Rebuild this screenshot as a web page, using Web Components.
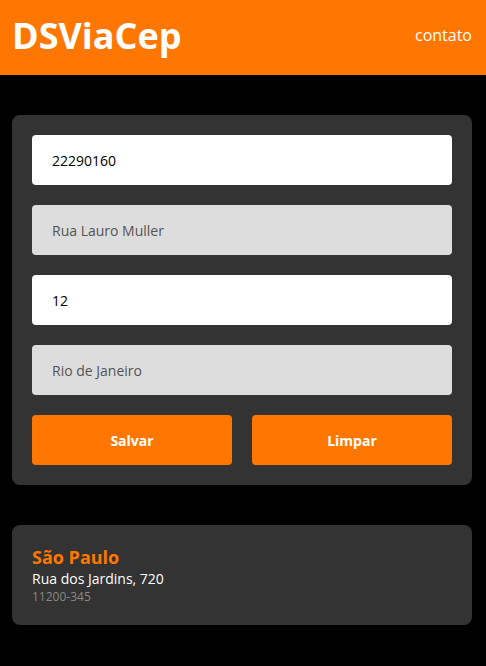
<!DOCTYPE html>
<html lang="pt-BR">
<head>
<meta charset="utf-8">
<meta name="viewport" content="width=device-width, initial-scale=1">
<title>DSViaCep</title>
<style>
  html { background: #000; }
  body { margin: 0; font-family: "Open Sans", sans-serif; color: #fff; --primary: #ff7700; --card: #333; }
</style>
</head>
<body>
<cep-app></cep-app>
<script>
const define = (name, html, init) => {
  const template = document.createElement('template');
  template.innerHTML = `<style>*{box-sizing:border-box}:host{display:block}</style>${html}`;
  customElements.define(name, class extends HTMLElement {
    constructor() {
      super();
      this.attachShadow({ mode: 'open' }).append(template.content.cloneNode(true));
    }
    connectedCallback() { if (init) init.call(this, this.shadowRoot); }
  });
};

define('cep-header', `
  <style>
    header { background: var(--primary); min-height: 75px; padding: 0 14px 4px 12px; display: flex; align-items: center; justify-content: space-between; }
    h1 { margin: 0; font-size: 36px; line-height: 48px; font-weight: 700; }
    a { display: block; color: #fff; font-size: 16px; line-height: 25px; text-decoration: none; }
  </style>
  <header><h1>DSViaCep</h1><nav><a href="#contato">contato</a></nav></header>`);

define('cep-card', `
  <style>:host { background: var(--card); border-radius: 8px; padding: 20px; }</style>
  <slot></slot>`);

define('cep-field', `
  <style>
    input { display: block; width: 100%; height: 50px; border: 0; border-radius: 4px; padding: 0 20px; background: #fff; color: #000; font: 14px "Open Sans", sans-serif; }
    input:disabled { background: #ddd; color: #545454; }
  </style>
  <input type="text">`, function (root) {
  const input = root.querySelector('input');
  input.value = this.getAttribute('value');
  input.disabled = this.hasAttribute('disabled');
  input.setAttribute('aria-label', this.getAttribute('label'));
});

define('cep-button', `
  <style>
    button { display: block; width: 100%; height: 50px; border: 0; border-radius: 4px; background: var(--primary); color: #fff; font: 700 14px "Open Sans", sans-serif; cursor: pointer; }
  </style>
  <button type="button"><slot></slot></button>`);

define('cep-address', `
  <style>
    h2 { margin: 0; color: var(--primary); font-size: 18px; line-height: 25px; font-weight: 700; }
    p { margin: 0; font-size: 14px; line-height: 18px; }
    .code { color: #888; font-size: 12px; line-height: 17px; }
  </style>
  <h2><slot name="city"></slot></h2>
  <p><slot name="street"></slot></p>
  <p class="code"><slot name="code"></slot></p>`);

define('cep-app', `
  <style>
    main { display: grid; gap: 40px; padding: 40px 14px 40px 12px; }
    form { display: grid; gap: 20px; }
    .actions { display: grid; grid-template-columns: 1fr 1fr; gap: 20px; }
  </style>
  <cep-header></cep-header>
  <main>
    <cep-card>
      <form>
        <cep-field label="CEP" value="22290160"></cep-field>
        <cep-field label="Rua" value="Rua Lauro Muller" disabled></cep-field>
        <cep-field label="Número" value="12"></cep-field>
        <cep-field label="Cidade" value="Rio de Janeiro" disabled></cep-field>
        <div class="actions"><cep-button>Salvar</cep-button><cep-button>Limpar</cep-button></div>
      </form>
    </cep-card>
    <cep-card>
      <cep-address>
        <span slot="city">São Paulo</span>
        <span slot="street">Rua dos Jardins, 720</span>
        <span slot="code">11200-345</span>
      </cep-address>
    </cep-card>
  </main>`);
</script>
</body>
</html>
